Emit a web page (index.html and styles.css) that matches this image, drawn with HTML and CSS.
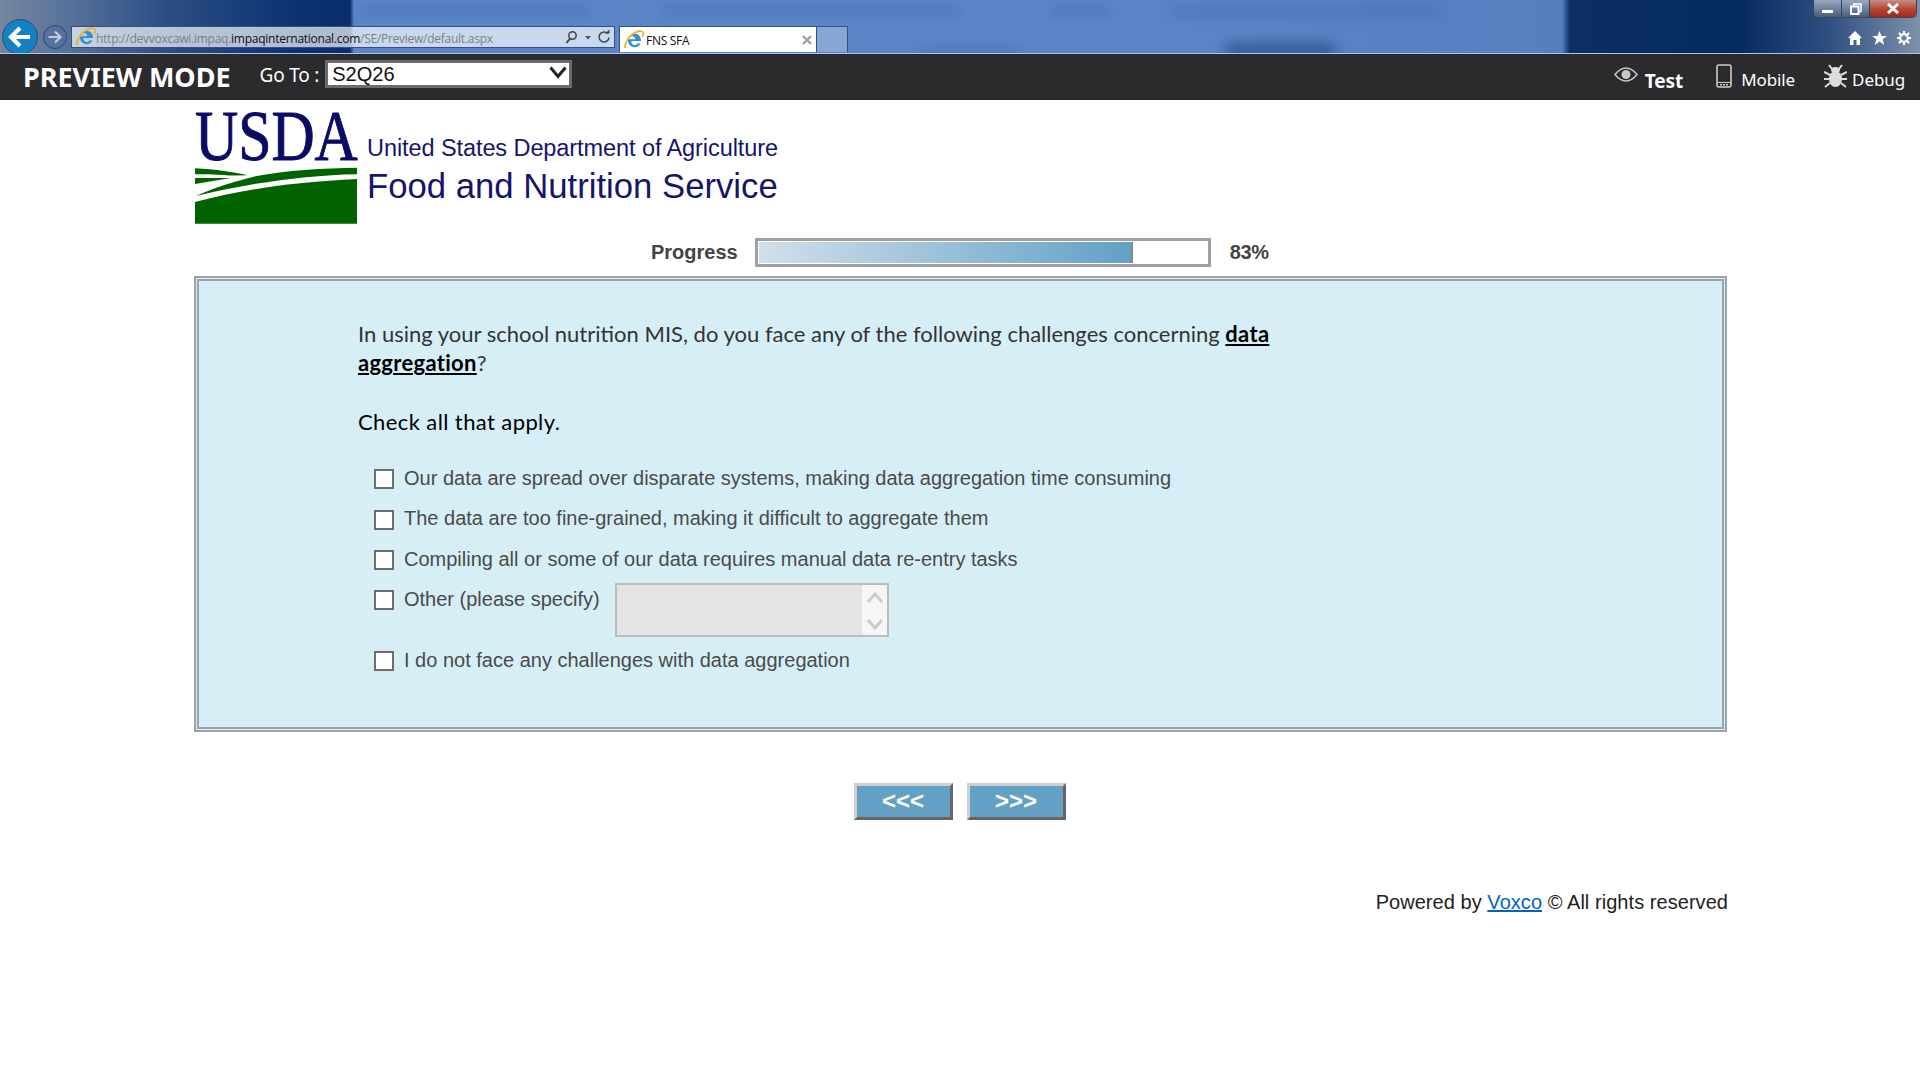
FILE: index.html
```html
<!DOCTYPE html>
<html lang="en">
<head>
<meta charset="utf-8">
<title>FNS SFA</title>
<link rel="stylesheet" href="styles.css">
</head>
<body>
<header class="chrome">
  <div class="blurs" aria-hidden="true">
    <span class="blur b1"></span><span class="blur b2"></span><span class="blur b3"></span><span class="blur b4"></span><span class="blur b5"></span><span class="blur b6"></span>
  </div>
  <div class="nav-back">
    <svg width="36" height="36" viewBox="0 0 36 36"><circle cx="18" cy="18" r="17.500" fill="#1282c4" stroke="#32496e"/><path d="M9 18h19M18 9l-9 9 9 9" fill="none" stroke="#fff" stroke-width="4.200"/></svg>
  </div>
  <div class="nav-fwd">
    <svg width="24" height="24" viewBox="0 0 24 24"><circle cx="12" cy="12" r="11.500" fill="#56739f" stroke="#2b4673"/><path d="M5.500 12h12M12 6.500l5.500 5.500-5.500 5.500" fill="none" stroke="#c3cbd8" stroke-width="2.200"/></svg>
  </div>
  <div class="address">
    <svg class="ie" width="20" height="20" viewBox="1 1 16 16"><use href="#ie-logo"/></svg>
    <span class="url">http://devvoxcawi.impaq.<b>impaqinternational.com</b>/SE/Preview/default.aspx</span>
    <svg class="addr-tools" width="50" height="18" viewBox="0 0 50 18"><circle cx="8.500" cy="7.500" r="3.700" fill="none" stroke="#444" stroke-width="1.500"/><path d="M6 10.500L2.500 15" stroke="#444" stroke-width="2"/><path d="M21 8h6l-3 3.500z" fill="#555"/><path d="M43.500 5.500a5 5 0 1 0 1.500 4" fill="none" stroke="#444" stroke-width="1.500"/><path d="M41 5.500h4.500V1.500z" fill="#444"/></svg>
  </div>
  <div class="tab">
    <svg class="ie" width="20" height="20" viewBox="1 1 16 16">
      <defs><g id="ie-logo"><path d="M4.800 9.800h9.800c.2-3.400-2.200-5.800-5-5.800-3 0-5.400 2.400-5.400 5.400 0 3 2.300 5.300 5.300 5.300 2.100 0 3.900-1 4.700-2.900h-2.500c-.5.800-1.200 1.200-2.200 1.200-1.500 0-2.600-1.100-2.700-3.200zm.1-1.500c.2-1.500 1.300-2.600 2.700-2.600s2.400 1 2.500 2.600z" fill="#2f8fd6" fill-rule="evenodd"/><path d="M2 15.500C.8 12 5.500 5 10 3c3-1.400 6-1.500 6.500.3.200 1-.3 2.200-1 3.200" fill="none" stroke="#eeb020" stroke-width="1.300"/></g></defs>
      <use href="#ie-logo"/>
    </svg>
    <span class="tab-title">FNS SFA</span>
    <svg class="tab-close" width="10" height="10" viewBox="0 0 10 10"><path d="M1 1l8 8M9 1l-8 8" stroke="#999" stroke-width="2"/></svg>
  </div>
  <div class="tab-stub"></div>
  <div class="chrome-right">
    <div class="win-btns">
      <span class="win-btn win-min"><i class="min-mark"></i></span>
      <span class="win-btn win-max"><svg width="12" height="12" viewBox="0 0 12 12"><path d="M3.500 3V1h7.500v7.500H9" fill="none" stroke="#fff" stroke-width="1.500"/><rect x="1" y="3.500" width="7.500" height="7.500" fill="none" stroke="#fff" stroke-width="2"/></svg></span>
      <span class="win-btn win-close"><svg width="14" height="11" viewBox="0 0 14 11"><path d="M2 1l10 9M12 1L2 10" stroke="#fff" stroke-width="3"/></svg></span>
    </div>
    <div class="tools">
      <svg width="14" height="14" viewBox="0 0 14 14"><path d="M7 0L0 7h2v7h3.500V9h3v5H12V7h2z" fill="#fff"/></svg>
      <svg width="15" height="14" viewBox="0 0 15 14"><path d="M7.500 0l2 5h5.500l-4.400 3.300 1.700 5.700-4.800-3.400L2.700 14l1.700-5.700L0 5h5.500z" fill="#fff"/></svg>
      <svg width="14" height="14" viewBox="0 0 14 14"><circle cx="7" cy="7" r="3.800" fill="none" stroke="#fff" stroke-width="2.200"/><path d="M7 0v3M7 11v3M0 7h3M11 7h3M2 2l2 2M10 10l2 2M12 2l-2 2M4 10l-2 2" stroke="#fff" stroke-width="2.200"/></svg>
    </div>
  </div>
</header>

<nav class="toolbar">
  <span class="mode">PREVIEW MODE</span>
  <label class="goto" for="goto">Go To :</label>
  <span class="select-wrap">
    <select id="goto" class="select"><option>S2Q26</option></select>
    <svg class="select-arrow" width="18" height="14" viewBox="0 0 18 14"><path d="M1.500 1.500l7.500 9 7.500-9" fill="none" stroke="#222" stroke-width="3"/></svg>
  </span>
  <div class="modes">
    <span class="mode-item mode-test">
      <svg width="24" height="15" viewBox="0 0 24 15"><path d="M1 7.500C5 2.500 8.500 1 12 1s7 1.500 11 6.500C19 12.500 15.500 14 12 14S5 12.500 1 7.500z" fill="none" stroke="#c8c8c8" stroke-width="1.500"/><circle cx="12" cy="7.500" r="4.500" fill="#c8c8c8"/></svg>
      <span>Test</span>
    </span>
    <span class="mode-item mode-mobile">
      <svg width="16" height="24" viewBox="0 0 16 24"><rect x="1" y="1" width="14" height="22" rx="2" fill="none" stroke="#ccc" stroke-width="1.600"/><path d="M2 18.500h12" stroke="#ccc"/><path d="M4 20.800h8" stroke="#ccc" stroke-width="1.500" stroke-dasharray="2 1"/></svg>
      <span>Mobile</span>
    </span>
    <span class="mode-item mode-debug">
      <svg width="23" height="24" viewBox="0 0 23 24"><ellipse cx="11.500" cy="15" rx="6.500" ry="8" fill="#ddd"/><ellipse cx="11.500" cy="6" rx="4.500" ry="3" fill="#ddd"/><path d="M5 1l3 4M18 1l-3 4M0 8l6 3M23 8l-6 3M0 15h6M23 15h-6M1 23l5-4M22 23l-5-4" stroke="#ddd" stroke-width="2"/></svg>
      <span>Debug</span>
    </span>
  </div>
</nav>

<main class="page">
  <div class="brand">
    <div class="logo">
      <div class="logo-word">USDA</div>
      <svg class="logo-field" width="163" height="57" viewBox="0 0 163 57"><path d="M0 35C50 22 100 15 163 12V57H0z" fill="#006300"/><path d="M163 .5V7C110 8 55 16 1 29 25 18 50 12 62 9 90 3 130 1 163 .5z" fill="#006300"/><path d="M0 1C20 2 40 5 53 8L40 8.500C25 7.500 10 7 0 7z" fill="#006300"/><path d="M0 11H36L0 17z" fill="#006300"/></svg>
    </div>
    <div class="agency">
      <div class="agency-dept">United States Department of Agriculture</div>
      <div class="agency-name">Food and Nutrition Service</div>
    </div>
  </div>

  <div class="progress">
    <span class="progress-label">Progress</span>
    <div class="progress-track"><div class="progress-fill" style="width:83.6%"></div></div>
    <span class="progress-pct">83%</span>
  </div>

  <section class="panel">
    <p class="question">In using your school nutrition MIS, do you face any of the following challenges concerning <a class="term">data aggregation</a>?</p>
    <p class="hint">Check all that apply.</p>
    <div class="options">
      <div class="option"><input class="check" type="checkbox"><span>Our data are spread over disparate systems, making data aggregation time consuming</span></div>
      <div class="option"><input class="check" type="checkbox"><span>The data are too fine-grained, making it difficult to aggregate them</span></div>
      <div class="option"><input class="check" type="checkbox"><span>Compiling all or some of our data requires manual data re-entry tasks</span></div>
      <div class="option option-other">
        <input class="check" type="checkbox"><span>Other (please specify)</span>
        <div class="other-box">
          <div class="scroll">
            <svg width="18" height="14" viewBox="0 0 18 14"><path d="M2 11l7-8 7 8" fill="none" stroke="#ccc" stroke-width="3"/></svg>
            <svg width="18" height="14" viewBox="0 0 18 14"><path d="M2 3l7 8 7-8" fill="none" stroke="#ccc" stroke-width="3"/></svg>
          </div>
        </div>
      </div>
      <div class="option"><input class="check" type="checkbox"><span>I do not face any challenges with data aggregation</span></div>
    </div>
  </section>

  <div class="buttons">
    <button class="btn" type="button">&lt;&lt;&lt;</button>
    <button class="btn" type="button">&gt;&gt;&gt;</button>
  </div>

  <footer class="footer">Powered by <a class="footer-link">Voxco</a> © All rights reserved</footer>
</main>
</body>
</html>
```
FILE: styles.css
```css
* { box-sizing: border-box; }
html, body { margin: 0; padding: 0; background: #fff; }
body { font-family: "Liberation Sans", Arial, sans-serif; height: 1080px; overflow: hidden; }

.chrome {
  position: relative;
  height: 54px;
  display: flex;
  align-items: flex-end;
  padding: 0 3px 1px 2px;
  overflow: hidden;
  border-bottom: 1px solid #a9c4e8;
  background: linear-gradient(90deg, #76879f 0, #56719a 70px, #2a4d84 170px, #0c3170 300px, #0b2e6b 350px, #5b86c8 354px, #5b86c8 1090px, #557fbf 1562px, #0b2e66 1570px, #062a62 1740px, #2f5080 1830px, #7f91aa 1920px);
}
.blurs { position: absolute; inset: 0; }
.blur { position: absolute; background: #23508f; filter: blur(7px); opacity: .3; }
.b1 { left: 360px; top: 7px; width: 230px; height: 8px; }
.b2 { left: 660px; top: 7px; width: 300px; height: 8px; }
.b3 { left: 1050px; top: 7px; width: 60px; height: 8px; }
.b4 { left: 1170px; top: 7px; width: 270px; height: 8px; }
.b5 { left: 915px; top: 48px; width: 110px; height: 8px; }
.b6 { left: 1225px; top: 44px; width: 110px; height: 14px; background: #14386f; opacity: .6; }

.nav-back, .nav-fwd, .address, .tab, .tab-stub, .chrome-right { position: relative; }
.nav-back { height: 36px; margin-bottom: -3px; }
.nav-back svg, .nav-fwd svg { display: block; }
.nav-fwd { margin: 0 0 3px 5px; }
.address {
  width: 544px;
  height: 22px;
  margin: 0 0 4px 4px;
  padding: 0 0 0 4px;
  display: flex;
  align-items: center;
  background: rgba(255, 255, 255, .68);
  border: 1px solid #33507e;
}
.url { margin-top: 2px; font: 12px "Open Sans", sans-serif; color: #7a7f88; white-space: nowrap; letter-spacing: -.26px; }
.url b { font-weight: 400; color: #111; }
.addr-tools { margin-left: auto; }
.tab {
  width: 198px;
  height: 26px;
  margin-left: 4px;
  padding: 0 4px;
  display: flex;
  align-items: center;
  background: #fff;
  border: 1px solid #33507e;
  border-bottom: 0;
}
.tab-title { margin: 2px 0 0 2px; font: 12px "Open Sans", sans-serif; color: #111; letter-spacing: -.3px; }
.tab-close { margin-left: auto; }
.tab-stub { width: 31px; height: 26px; background: rgba(190, 203, 224, .45); border-right: 1px solid #33507e; border-top: 1px solid #33507e; }

.chrome-right {
  margin-left: auto;
  align-self: stretch;
  display: flex;
  flex-direction: column;
  align-items: flex-end;
}
.win-btns { display: flex; height: 18px; border: 1px solid #39465c; border-top: 0; border-radius: 0 0 5px 5px; overflow: hidden; }
.win-btn { display: flex; align-items: center; justify-content: center; height: 100%; }
.win-min, .win-max { width: 28px; background: linear-gradient(#97a7be, #70839e 50%, #475e7e); border-right: 1px solid #34435a; }
.win-close { width: 46px; background: linear-gradient(#c58f86, #b8432f 55%, #a12a1c); }
.min-mark { width: 11px; height: 3px; margin-top: 5px; background: #fff; }
.tools { display: flex; gap: 10px; margin: 13px 6px 0 0; }

.toolbar {
  height: 46px;
  display: flex;
  align-items: center;
  padding: 0 15px 0 23px;
  background: #2b2b2d;
  color: #fff;
}
.mode { font: 700 27px "Noto Sans", sans-serif; margin-bottom: 2px; }
.goto { margin: 0 0 4px 29px; font: 19px "Noto Sans", sans-serif; letter-spacing: -.2px; }
.select-wrap { position: relative; display: block; margin: 0 0 6px 6px; }
.select {
  display: block;
  width: 247px;
  height: 28px;
  padding: 0 4px;
  appearance: none;
  border: 3px solid #6b6b6b;
  border-radius: 0;
  background: #fff;
  color: #111;
  font: 20px "Liberation Sans", sans-serif;
}
.select-arrow { position: absolute; right: 5px; top: 6px; pointer-events: none; }
.modes { margin: 3px 0 0 auto; display: flex; align-items: center; }
.mode-item { display: flex; align-items: center; font: 17px "Noto Sans", sans-serif; letter-spacing: -.1px; }
.mode-item svg { display: block; margin-top: -6px; }
.mode-test { font-weight: 700; font-size: 19px; gap: 7px; }
.mode-test svg { margin-top: -8px; }
.mode-test span { margin-top: 4px; }
.mode-mobile { margin-left: 33px; gap: 9px; }
.mode-mobile span { margin-top: 2px; }
.mode-debug { margin-left: 29px; gap: 5px; }
.mode-debug span { margin-top: 2px; }

.page { width: 1533px; margin-left: 194px; }

.brand { display: flex; align-items: flex-start; padding-top: 9px; height: 138px; }
.logo { width: 164px; padding-left: 1px; display: flex; flex-direction: column; }
.logo-word {
  height: 54px;
  margin-bottom: 4px;
  font: 400 72px/54px "Liberation Serif", serif;
  color: #0b0b66;
  -webkit-text-stroke: 1px #0b0b66;
  white-space: nowrap;
  transform: scaleX(.83);
  transform-origin: left center;
}
.logo-field { display: block; width: 162px; }
.agency { margin: 24px 0 0 9px; color: #15156b; }
.agency-dept { font-size: 23.500px; line-height: 30px; letter-spacing: -.08px; }
.agency-name { margin-top: 2px; font-size: 34.700px; line-height: 42px; }

.progress { display: flex; align-items: center; height: 29px; margin-bottom: 9px; padding-left: 457px; color: #444; font-weight: 700; font-size: 20px; }
.progress-track { width: 456px; height: 29px; margin-left: 17px; padding: 1px; border: 3px solid #a0a0a0; background: #fff; }
.progress-fill { height: 100%; background: linear-gradient(90deg, #d1e0ea, #62a0c6); border-right: 2px solid #868686; }
.progress-pct { margin-left: 19px; letter-spacing: -.3px; }

.panel {
  height: 456px;
  border: 5px double #99a3a8;
  background: #d6eff7;
  padding: 38px 0 0 159px;
}
.question { width: 930px; margin: 0; font: 22px/29.400px "Lato", sans-serif; color: #333; }
.term { font-weight: 700; color: #000; text-decoration: underline; letter-spacing: .3px; }
.hint { margin: 29px 0 0; font: 22px/29.400px "Lato", sans-serif; color: #000; letter-spacing: .4px; }
.options { margin-top: 21.300px; padding-left: 16px; display: flex; flex-direction: column; color: #4a4a4a; font-size: 20px; line-height: 24px; }
.option { display: flex; align-items: center; height: 40.500px; }
.option-other { align-items: flex-start; height: 60.500px; padding-top: 8px; }
.check {
  appearance: none;
  flex: none;
  width: 20px;
  height: 20px;
  margin: 3px 10px 0 0;
  border: 2px solid #6d6d6d;
  background: #fff;
  border-radius: 0;
}
.other-box {
  width: 274px;
  height: 54px;
  margin: -4px 0 0 15px;
  display: flex;
  justify-content: flex-end;
  border: 2px solid #bcbcbc;
  background: #e4e4e4;
}
.scroll { width: 25px; padding: 6px 0 4px 4px; display: flex; flex-direction: column; justify-content: space-between; background: #f6f6f6; }
.scroll svg { display: block; }

.buttons { display: flex; justify-content: center; gap: 14px; margin-top: 51px; padding-right: 2px; }
.btn {
  width: 99px;
  height: 37px;
  padding: 0 0 2px;
  border: 3px solid;
  border-color: #cfcfcf #666 #666 #cfcfcf;
  background: #62a0c6;
  color: #fff;
  font: 700 24px "Liberation Sans", sans-serif;
}

.footer { margin: 70px -1px 0 0; text-align: right; font-size: 20px; line-height: 24px; color: #222; letter-spacing: .05px; }
.footer-link { color: #0563c1; text-decoration: underline; }
```
